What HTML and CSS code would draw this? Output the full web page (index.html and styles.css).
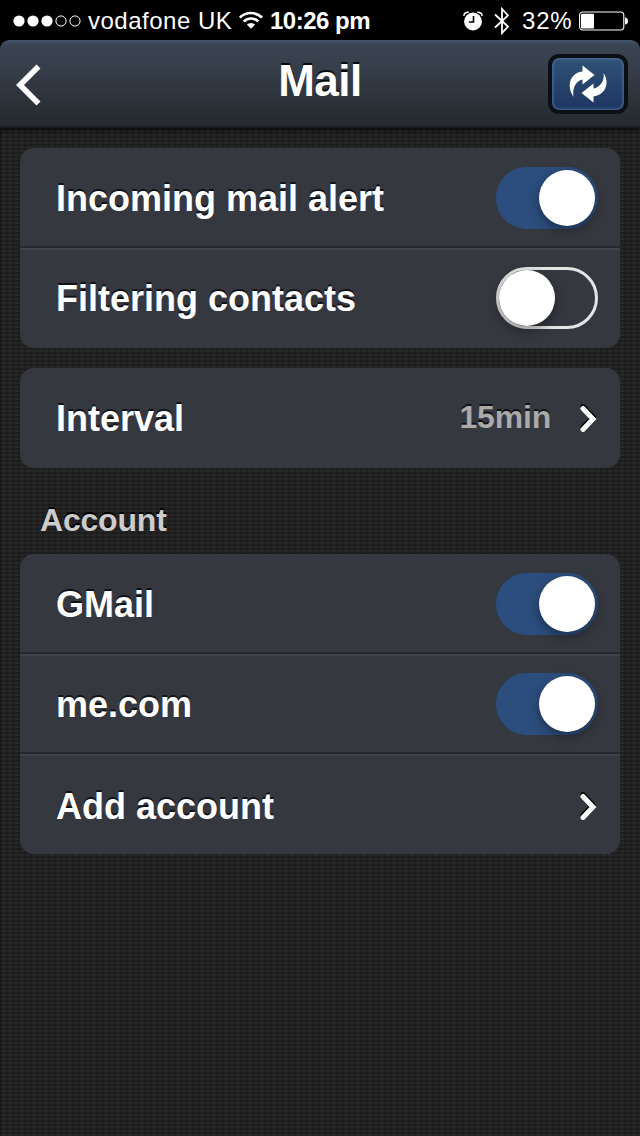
FILE: index.html
```html
<!DOCTYPE html>
<html lang="en">
<head>
    <meta charset="UTF-8">
    <meta name="viewport" content="width=device-width, initial-scale=1.0">
    <title>Mail</title>
    <link rel="stylesheet" href="styles.css">
</head>
<body>
    <div class="statusbar">
        <svg class="signal" width="68" height="12" viewBox="0 0 68 12">
            <g fill="#fff"><circle cx="6" cy="6" r="5.6"/><circle cx="20" cy="6" r="5.6"/><circle cx="34" cy="6" r="5.6"/></g>
            <g fill="none" stroke="#fff"><circle cx="48" cy="6" r="5.1"/><circle cx="62" cy="6" r="5.1"/></g>
        </svg>
        <span class="carrier">vodafone UK</span>
        <svg class="wifi" width="24" height="18" viewBox="0 0 24 18">
            <g fill="none" stroke="#fff" stroke-width="2.7">
                <path d="M.9 6.6a15.7 15.7 0 0 1 22.2 0"/>
                <path d="M4.8 10.5a10.2 10.2 0 0 1 14.4 0"/>
            </g>
            <path d="M7.9 13.6a5.8 5.8 0 0 1 8.2 0L12 17.7z" fill="#fff"/>
        </svg>
        <span class="time">10:26 pm</span>
        <div class="status-right">
            <svg class="alarm" width="20" height="20" viewBox="0 0 20 20">
                <circle cx="10" cy="10.5" r="8.9" fill="#fff"/>
                <path d="M.8 4.8Q1.2 1.2 5.8 1.3M19.2 4.8Q18.8 1.2 14.2 1.3" fill="none" stroke="#fff" stroke-width="1.5"/>
                <path d="M10.5 5v6H6" fill="none" stroke="#000" stroke-width="1.6"/>
            </svg>
            <svg class="bluetooth" width="16" height="28" viewBox="0 0 16 28">
                <path d="M1 7.5l13 12-6 6.5V2l6 6.5-13 12" fill="none" stroke="#fff" stroke-width="1.8"/>
            </svg>
            <span class="percent">32%</span>
            <svg class="battery" width="50" height="20" viewBox="0 0 50 20">
                <rect x=".6" y="1" width="44.2" height="18" rx="3.2" fill="none" stroke="#fff" stroke-width="1.1"/>
                <rect x="2" y="2.8" width="13" height="14.6" rx="1" fill="#fff"/>
                <path d="M46 6.4q3 .4 3 3.6t-3 3.6z" fill="#fff"/>
            </svg>
        </div>
    </div>

    <div class="header-wrap">
        <div class="header">
            <a class="back" href="#">
                <svg width="28" height="42" viewBox="0 0 28 42">
                    <path d="M23.5 2.5L5 21l18.5 18.5" fill="none" stroke="#fff" stroke-width="5.6"/>
                </svg>
            </a>
            <h1>Mail</h1>
            <button class="refresh">
                <svg width="38" height="38" viewBox="0 0 38 38">
                    <path d="M4.5 32C-3 21 1 8 13.5 6.500V.5L25.500 10 13.500 19.500V14.500C8 15.500 3 22 4.500 32z" fill="#fff"/>
                    <path d="M34.500 8C41 17 37 30 24.500 31.500V37.500L12.500 28 24.500 18.500V23.500C30 22.500 36 17 34.500 8z" fill="#fff"/>
                </svg>
            </button>
        </div>
    </div>

    <div class="content">
        <div class="panel">
            <div class="row"><span>Incoming mail alert</span><div class="toggle on"><i></i></div></div>
            <div class="row"><span>Filtering contacts</span><div class="toggle"><i></i></div></div>
        </div>
        <div class="panel">
            <div class="row">
                <span>Interval</span>
                <span class="value">15min</span>
                <svg class="chevron" width="18" height="28" viewBox="0 0 18 28">
                    <path d="M3 2.5L13 13 3 23.5" stroke="#000"/>
                    <path d="M3 4.5L13 15 3 25.5" stroke="#fff"/>
                </svg>
            </div>
        </div>
        <h2>Account</h2>
        <div class="panel">
            <div class="row"><span>GMail</span><div class="toggle on"><i></i></div></div>
            <div class="row"><span>me.com</span><div class="toggle on"><i></i></div></div>
            <div class="row add">
                <span>Add account</span>
                <svg class="chevron" width="18" height="28" viewBox="0 0 18 28">
                    <path d="M3 2.5L13 13 3 23.5" stroke="#000"/>
                    <path d="M3 4.5L13 15 3 25.5" stroke="#fff"/>
                </svg>
            </div>
        </div>
    </div>
</body>
</html>
```
FILE: styles.css
```css
* { box-sizing: border-box; }
body {
    margin: 0;
    min-height: 1136px;
    font-family: "Liberation Sans", Arial, sans-serif;
    color: #fff;
    background-color: #222;
    background-image:
        linear-gradient(90deg, rgba(0,0,0,.3) 1px, transparent 1px),
        repeating-linear-gradient(90deg, rgba(0,0,0,.14) 0 2px, transparent 2px 6px),
        repeating-linear-gradient(180deg, #1f1f1f 0 2px, #272727 2px 4px);
}
svg { display: block; flex: none; }

/* status bar */
.statusbar { display: flex; align-items: center; height: 40px; padding: 1px 11px 0 13px; background: #000; font-size: 24px; line-height: 40px; white-space: nowrap; }
.carrier { width: 151px; padding-left: 7px; letter-spacing: .5px; }
.wifi { margin: 0 0 1px 7px; }
.time { margin-left: 7px; font-weight: bold; letter-spacing: -.5px; }
.status-right { display: flex; align-items: center; margin-left: auto; }
.bluetooth { margin-left: 11px; }
.percent { width: 52px; margin: 0 5px 0 12px; letter-spacing: .8px; }

/* header */
.header-wrap { background: linear-gradient(#000 20px, transparent 20px); }
.header { display: flex; align-items: center; justify-content: space-between; height: 88px; padding: 0 12px 0 15px; border-radius: 9px 9px 0 0; border-bottom: 2px solid #1a1e24; background: linear-gradient(#46566a 0, #3a4452 5px, #363e4a 30px, #2c3138 64px, #25292f 100%); box-shadow: 0 2px 5px rgba(0,0,0,.7); }
.back { width: 77px; padding-top: 3px; }
h1 { margin: 0; padding-bottom: 4px; font-size: 44px; line-height: 50px; letter-spacing: -.5px; text-shadow: 0 -2px 0 #08090b; }
.refresh { display: flex; align-items: center; justify-content: center; width: 80px; height: 60px; margin-top: 1px; padding: 0; border: 4px solid #0c0f13; border-radius: 11px; background: linear-gradient(#305276, #1e3562); box-shadow: inset 0 0 3px 1px #4e709c; }

/* settings */
.content { padding: 20px; }
.panel { margin-bottom: 20px; border-radius: 14px; background: #363840; overflow: hidden; }
.row { display: flex; align-items: center; height: 100px; padding: 0 22px 0 36px; font-size: 36px; font-weight: bold; line-height: 44px; text-shadow: 0 -2px 0 #111216; }
.row > span:first-child { flex: 1; padding-top: 2px; }
.row:not(:last-child) { box-shadow: inset 0 -2px 0 #27292e; }
.row + .row { box-shadow: inset 0 2px 0 #434449; }
.row + .row:not(:last-child) { box-shadow: inset 0 2px 0 #434449, inset 0 -2px 0 #27292e; }
.add { padding-top: 4px; }
.value { margin-right: 29px; padding-bottom: 2px; font-size: 32px; letter-spacing: -.2px; color: #aaa; }
.chevron { fill: none; stroke-width: 5; stroke-linecap: round; }
h2 { margin: 0; padding: 10px 0 14px 20px; height: 66px; font-size: 32px; line-height: 44px; letter-spacing: -.2px; color: #ccc; text-shadow: 0 -2px 0 #000; }

.toggle { width: 102px; height: 62px; border: 3px solid #e5e5e5; border-radius: 31px; }
.toggle i { display: block; width: 56px; height: 56px; border-radius: 50%; background: #fff; box-shadow: 0 4px 12px rgba(0,0,0,.4); }
.toggle.on { border-color: #2c4e7e; background: #2c4e7e; }
.toggle.on i { margin-left: 40px; }
```
